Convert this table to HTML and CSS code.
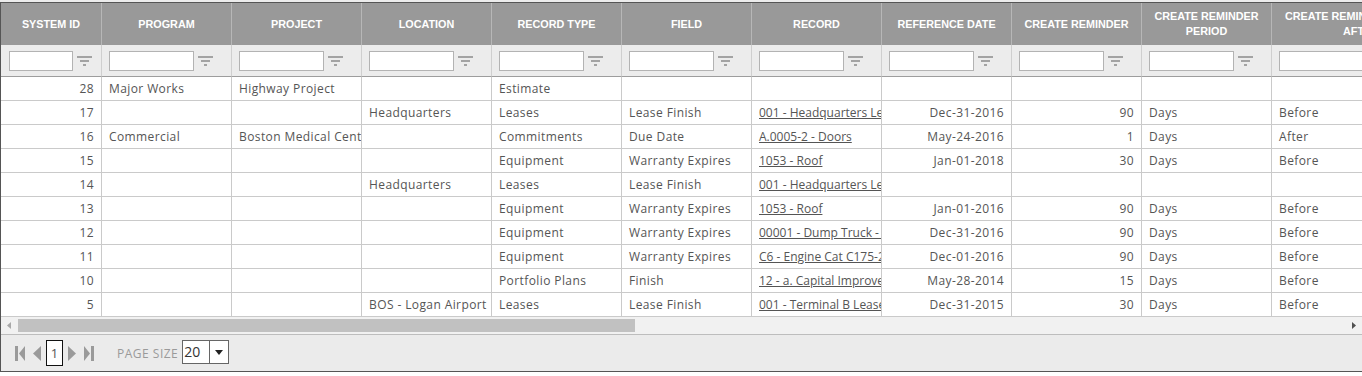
FILE: index.html
```html
<!DOCTYPE html>
<html lang="en">
<head>
<meta charset="utf-8">
<title>Reminders grid</title>
<link rel="stylesheet" href="styles.css">
</head>
<body>
<div class="topstrip"></div>
<div class="grid">
  <div class="viewport">
    <table class="table">
      <colgroup>
        <col class="c-id"><col class="c-std"><col class="c-std"><col class="c-std"><col class="c-std"><col class="c-std"><col class="c-std"><col class="c-std"><col class="c-std"><col class="c-std"><col class="c-last">
      </colgroup>
      <thead>
        <tr class="head">
          <th>SYSTEM ID</th>
          <th>PROGRAM</th>
          <th>PROJECT</th>
          <th>LOCATION</th>
          <th>RECORD TYPE</th>
          <th>FIELD</th>
          <th>RECORD</th>
          <th>REFERENCE DATE</th>
          <th>CREATE REMINDER</th>
          <th>CREATE REMINDER PERIOD</th>
          <th>CREATE REMINDER BEFORE AFTER</th>
        </tr>
        <tr class="filters">
          <td class="f-first"><div class="fcell"><input type="text"><svg class="ficon" width="15" height="10" viewBox="0 0 15 10"><rect x="0" y="0" width="15" height="2" fill="#a3a3a3"/><rect x="3" y="4" width="9" height="2" fill="#a3a3a3"/><rect x="6" y="8" width="3" height="2" fill="#a3a3a3"/></svg></div></td>
          <td><div class="fcell"><input type="text"><svg class="ficon" width="15" height="10" viewBox="0 0 15 10"><rect x="0" y="0" width="15" height="2" fill="#a3a3a3"/><rect x="3" y="4" width="9" height="2" fill="#a3a3a3"/><rect x="6" y="8" width="3" height="2" fill="#a3a3a3"/></svg></div></td>
          <td><div class="fcell"><input type="text"><svg class="ficon" width="15" height="10" viewBox="0 0 15 10"><rect x="0" y="0" width="15" height="2" fill="#a3a3a3"/><rect x="3" y="4" width="9" height="2" fill="#a3a3a3"/><rect x="6" y="8" width="3" height="2" fill="#a3a3a3"/></svg></div></td>
          <td><div class="fcell"><input type="text"><svg class="ficon" width="15" height="10" viewBox="0 0 15 10"><rect x="0" y="0" width="15" height="2" fill="#a3a3a3"/><rect x="3" y="4" width="9" height="2" fill="#a3a3a3"/><rect x="6" y="8" width="3" height="2" fill="#a3a3a3"/></svg></div></td>
          <td><div class="fcell"><input type="text"><svg class="ficon" width="15" height="10" viewBox="0 0 15 10"><rect x="0" y="0" width="15" height="2" fill="#a3a3a3"/><rect x="3" y="4" width="9" height="2" fill="#a3a3a3"/><rect x="6" y="8" width="3" height="2" fill="#a3a3a3"/></svg></div></td>
          <td><div class="fcell"><input type="text"><svg class="ficon" width="15" height="10" viewBox="0 0 15 10"><rect x="0" y="0" width="15" height="2" fill="#a3a3a3"/><rect x="3" y="4" width="9" height="2" fill="#a3a3a3"/><rect x="6" y="8" width="3" height="2" fill="#a3a3a3"/></svg></div></td>
          <td><div class="fcell"><input type="text"><svg class="ficon" width="15" height="10" viewBox="0 0 15 10"><rect x="0" y="0" width="15" height="2" fill="#a3a3a3"/><rect x="3" y="4" width="9" height="2" fill="#a3a3a3"/><rect x="6" y="8" width="3" height="2" fill="#a3a3a3"/></svg></div></td>
          <td><div class="fcell"><input type="text"><svg class="ficon" width="15" height="10" viewBox="0 0 15 10"><rect x="0" y="0" width="15" height="2" fill="#a3a3a3"/><rect x="3" y="4" width="9" height="2" fill="#a3a3a3"/><rect x="6" y="8" width="3" height="2" fill="#a3a3a3"/></svg></div></td>
          <td><div class="fcell"><input type="text"><svg class="ficon" width="15" height="10" viewBox="0 0 15 10"><rect x="0" y="0" width="15" height="2" fill="#a3a3a3"/><rect x="3" y="4" width="9" height="2" fill="#a3a3a3"/><rect x="6" y="8" width="3" height="2" fill="#a3a3a3"/></svg></div></td>
          <td><div class="fcell"><input type="text"><svg class="ficon" width="15" height="10" viewBox="0 0 15 10"><rect x="0" y="0" width="15" height="2" fill="#a3a3a3"/><rect x="3" y="4" width="9" height="2" fill="#a3a3a3"/><rect x="6" y="8" width="3" height="2" fill="#a3a3a3"/></svg></div></td>
          <td><div class="fcell"><input type="text"><svg class="ficon" width="15" height="10" viewBox="0 0 15 10"><rect x="0" y="0" width="15" height="2" fill="#a3a3a3"/><rect x="3" y="4" width="9" height="2" fill="#a3a3a3"/><rect x="6" y="8" width="3" height="2" fill="#a3a3a3"/></svg></div></td>
        </tr>
      </thead>
      <tbody>
        <tr><td class="num">28</td><td>Major Works</td><td>Highway Project</td><td></td><td>Estimate</td><td></td><td></td><td class="num"></td><td class="num"></td><td></td><td></td></tr>
        <tr><td class="num">17</td><td></td><td></td><td>Headquarters</td><td>Leases</td><td>Lease Finish</td><td><a href="#">001 - Headquarters Lease</a></td><td class="num">Dec-31-2016</td><td class="num">90</td><td>Days</td><td>Before</td></tr>
        <tr><td class="num">16</td><td>Commercial</td><td>Boston Medical Center</td><td></td><td>Commitments</td><td>Due Date</td><td><a href="#">A.0005-2 - Doors</a></td><td class="num">May-24-2016</td><td class="num">1</td><td>Days</td><td>After</td></tr>
        <tr><td class="num">15</td><td></td><td></td><td></td><td>Equipment</td><td>Warranty Expires</td><td><a href="#">1053 - Roof</a></td><td class="num">Jan-01-2018</td><td class="num">30</td><td>Days</td><td>Before</td></tr>
        <tr><td class="num">14</td><td></td><td></td><td>Headquarters</td><td>Leases</td><td>Lease Finish</td><td><a href="#">001 - Headquarters Lease</a></td><td class="num"></td><td class="num"></td><td></td><td></td></tr>
        <tr><td class="num">13</td><td></td><td></td><td></td><td>Equipment</td><td>Warranty Expires</td><td><a href="#">1053 - Roof</a></td><td class="num">Jan-01-2016</td><td class="num">90</td><td>Days</td><td>Before</td></tr>
        <tr><td class="num">12</td><td></td><td></td><td></td><td>Equipment</td><td>Warranty Expires</td><td><a href="#">00001 - Dump Truck - Ford</a></td><td class="num">Dec-31-2016</td><td class="num">90</td><td>Days</td><td>Before</td></tr>
        <tr><td class="num">11</td><td></td><td></td><td></td><td>Equipment</td><td>Warranty Expires</td><td><a href="#">C6 - Engine Cat C175-20</a></td><td class="num">Dec-01-2016</td><td class="num">90</td><td>Days</td><td>Before</td></tr>
        <tr><td class="num">10</td><td></td><td></td><td></td><td>Portfolio Plans</td><td>Finish</td><td><a href="#">12 - a. Capital Improvements</a></td><td class="num">May-28-2014</td><td class="num">15</td><td>Days</td><td>Before</td></tr>
        <tr><td class="num">5</td><td></td><td></td><td>BOS - Logan Airport</td><td>Leases</td><td>Lease Finish</td><td><a href="#">001 - Terminal B Lease</a></td><td class="num">Dec-31-2015</td><td class="num">30</td><td>Days</td><td>Before</td></tr>
      </tbody>
    </table>
  </div>
  <div class="hscroll">
    <div class="sbtn"><svg width="4" height="7" viewBox="0 0 4 7"><path d="M4 0 L0 3.5 L4 7 Z" fill="#a8a8a8"/></svg></div>
    <div class="thumb"></div>
    <div class="sbtn sbtn-right"><svg width="4" height="7" viewBox="0 0 4 7"><path d="M0 0 L4 3.5 L0 7 Z" fill="#505050"/></svg></div>
  </div>
  <div class="pager">
    <svg class="pico" width="10" height="15" viewBox="0 0 10 15"><rect x="0" y="0" width="3" height="15" fill="#9a9a9a"/><path d="M10 0 L4 7.5 L10 15 Z" fill="#9a9a9a"/></svg>
    <svg class="pico prev" width="8" height="15" viewBox="0 0 8 15"><path d="M8 0 L0 7.5 L8 15 Z" fill="#9a9a9a"/></svg>
    <div class="pagebox">1</div>
    <svg class="pico next" width="8" height="15" viewBox="0 0 8 15"><path d="M0 0 L8 7.5 L0 15 Z" fill="#9a9a9a"/></svg>
    <svg class="pico last" width="10" height="15" viewBox="0 0 10 15"><path d="M0 0 L6 7.5 L0 15 Z" fill="#9a9a9a"/><rect x="7" y="0" width="3" height="15" fill="#9a9a9a"/></svg>
    <span class="psize">PAGE SIZE</span>
    <div class="select">
      <span class="sval">20</span>
      <span class="sarrow"><svg width="8" height="5" viewBox="0 0 8 5"><path d="M0 0 L8 0 L4 5 Z" fill="#222"/></svg></span>
    </div>
  </div>
</div>
</body>
</html>
```
FILE: styles.css
```css
html, body {
  margin: 0;
  padding: 0;
  background: #ffffff;
  overflow: hidden;
}
body {
  font-family: "Open Sans", "Noto Sans", Arial, sans-serif;
  font-size: 12px;
  color: #555;
}
.topstrip {
  height: 2px;
  background: #ececec;
}
.grid {
  width: 1363px;
  box-sizing: border-box;
  border: 1px solid #555;
  background: #fff;
}
.viewport {
  overflow: hidden;
  width: 100%;
}
.table {
  table-layout: fixed;
  border-collapse: separate;
  border-spacing: 0;
  width: 1450px;
}
.c-id { width: 101px; }
.c-std { width: 130px; }
.c-last { width: 179px; }
.table th,
.table td {
  box-sizing: border-box;
  padding: 0 7px;
  white-space: nowrap;
  overflow: hidden;
  text-overflow: clip;
}
.head th {
  height: 42px;
  background: #999999;
  color: #ffffff;
  font-family: "Liberation Sans", Arial, sans-serif;
  font-weight: 700;
  font-size: 10.8px;
  line-height: 15px;
  text-align: center;
  white-space: normal;
  border-right: 1px solid #b7b7b7;
  padding: 0 8px;
}
.filters td {
  height: 32px;
  background: #ececec;
  border-right: 1px solid #cfcfcf;
  border-bottom: 1px solid #9d9d9d;
  padding: 0 0 0 7px;
}
.filters td.f-first {
  padding-left: 8px;
}
.fcell {
  display: flex;
  align-items: center;
  padding-top: 1px;
}
.fcell input {
  width: 70%;
  height: 20px;
  box-sizing: border-box;
  border: 1px solid #b3b3b3;
  background: #fff;
  margin: 0;
  padding: 0 3px;
  flex: none;
}
.ficon {
  margin-left: 4px;
  flex: none;
}
tbody td {
  height: 24px;
  border-right: 1px solid #cacaca;
  border-bottom: 1px solid #cacaca;
  color: #555;
  font-size: 12px;
  letter-spacing: 0.4px;
  padding-top: 2px;
}
tbody td.num {
  text-align: right;
}
tbody a {
  color: #555;
  text-decoration: underline;
  letter-spacing: 0;
}
.hscroll {
  display: flex;
  align-items: center;
  height: 17px;
  background: #f1f1f1;
  border-bottom: 1px solid #bdbdbd;
}
.sbtn {
  width: 15px;
  height: 17px;
  display: flex;
  align-items: center;
  justify-content: center;
  flex: none;
}
.sbtn-right {
  margin-left: auto;
  width: 17px;
}
.thumb {
  width: 617px;
  height: 13px;
  margin-left: 2px;
  background: #c1c1c1;
  flex: none;
}
.pager {
  display: flex;
  align-items: center;
  height: 36px;
  background: #ebebeb;
  padding-left: 14px;
}
.pico { flex: none; display: block; }
.prev { margin-left: 8px; }
.pagebox {
  margin-left: 5px;
  width: 17px;
  height: 26px;
  box-sizing: border-box;
  border: 1px solid #111;
  background: #fff;
  color: #555;
  font-size: 13px;
  display: flex;
  align-items: center;
  justify-content: center;
}
.next { margin-left: 5px; }
.last { margin-left: 8px; }
.psize {
  margin-left: 23px;
  color: #9a9a9a;
  font-size: 12px;
  letter-spacing: 0.5px;
}
.select {
  margin-left: 4px;
  margin-bottom: 2px;
  width: 47px;
  height: 24px;
  box-sizing: border-box;
  border: 1px solid #666;
  background: #fff;
  display: flex;
}
.sval {
  width: 25px;
  border-right: 1px solid #666;
  font-size: 14px;
  color: #333;
  line-height: 22px;
  padding-left: 1px;
}
.sarrow {
  flex: 1;
  display: flex;
  align-items: center;
  justify-content: center;
}
```
